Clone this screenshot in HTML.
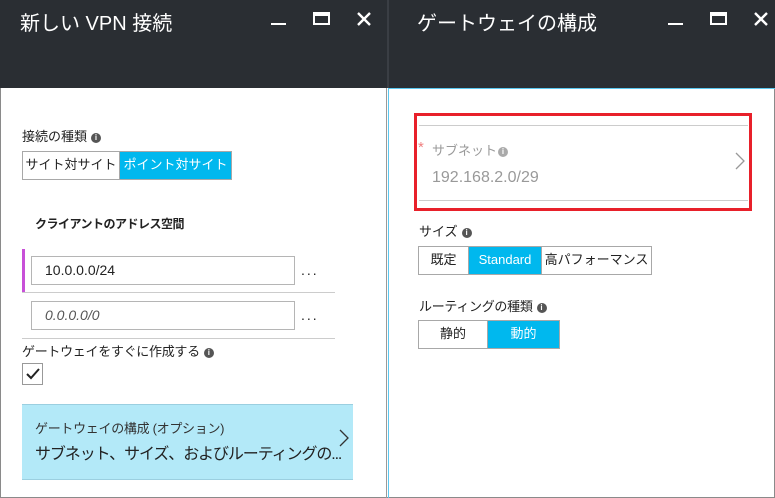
<!DOCTYPE html>
<html><head><meta charset="utf-8"><style>
*{margin:0;padding:0;box-sizing:border-box}
body{width:775px;height:498px;position:relative;overflow:hidden;background:#fff;font-family:"Liberation Sans","Noto Sans CJK JP",sans-serif;color:#222}
.a{position:absolute;white-space:nowrap}
.hdr{background:#2a2e33;height:88px;top:0}
.t{color:#fff;font-size:20px;top:7px}
.btn{border:1px solid #a8a8a8;background:#fff;font-size:13px;text-align:center;line-height:26px;overflow:hidden}
.sel{background:#00b8ee;color:#fff}
.info{display:inline-block;width:10px;height:10px;border-radius:50%;background:#555;color:#fff;font-size:8px;line-height:10px;text-align:center;font-weight:bold;vertical-align:1px;margin-left:4px;letter-spacing:0}
.inp{border:1px solid #b5b5b5;font-size:14px;padding-left:13px;line-height:26px}
.dots{font-size:14px;letter-spacing:2px}
</style></head><body>
<div class="a" style="left:0;top:0;width:775px;height:498px;border:1px solid #8a8a8a"></div>
<div class="a hdr" style="left:0;width:387px"></div>
<div class="a hdr" style="left:387px;width:388px;border-left:2px solid #3a3e44"></div>
<div class="a" style="left:386px;top:88px;width:1px;height:410px;background:#9a9a9a"></div>
<div class="a" style="left:388px;top:88px;width:387px;height:410px;border-left:1px solid #5bc8f0;border-top:1px solid #5bc8f0"></div>
<div class="a t" style="left:20px">新しい VPN 接続</div>
<div class="a t" style="left:417px">ゲートウェイの構成</div>
<div class="a" style="left:271px;top:23px;width:15px;height:2px;background:#fff"></div>
<div class="a" style="left:313px;top:12px;width:17px;height:13px;border:2px solid #fff;border-top-width:4px"></div>
<svg class="a" style="left:356px;top:11px" width="16" height="16"><path d="M2 2L14 14M14 2L2 14" stroke="#fff" stroke-width="2.4"/></svg>
<div class="a" style="left:668px;top:23px;width:15px;height:2px;background:#fff"></div>
<div class="a" style="left:710px;top:12px;width:17px;height:13px;border:2px solid #fff;border-top-width:4px"></div>
<svg class="a" style="left:753px;top:11px" width="16" height="16"><path d="M2 2L14 14M14 2L2 14" stroke="#fff" stroke-width="2.4"/></svg>
<div class="a" style="left:22px;top:126px;font-size:13px">接続の種類<span class="info">i</span></div>
<div class="a btn" style="left:22px;top:151px;width:98px;height:29px">サイト対サイト</div>
<div class="a btn sel" style="left:119px;top:151px;width:113px;height:29px">ポイント対サイト</div>
<div class="a" style="left:35px;top:215px;font-size:12px;font-weight:bold;letter-spacing:-0.5px">クライアントのアドレス空間</div>
<div class="a" style="left:22px;top:249px;width:3px;height:44px;background:#c850d8"></div>
<div class="a inp" style="left:31px;top:256px;width:264px;height:29px">10.0.0.0/24</div>
<div class="a dots" style="left:301px;top:262px">...</div>
<div class="a" style="left:22px;top:292px;width:313px;height:1px;background:#ccc"></div>
<div class="a inp" style="left:31px;top:301px;width:264px;height:29px;font-style:italic;color:#555">0.0.0.0/0</div>
<div class="a dots" style="left:301px;top:307px">...</div>
<div class="a" style="left:22px;top:338px;width:313px;height:1px;background:#ccc"></div>
<div class="a" style="left:22px;top:341px;font-size:13px;letter-spacing:-0.3px">ゲートウェイをすぐに作成する<span class="info">i</span></div>
<div class="a" style="left:22px;top:363px;width:21px;height:22px;border:1px solid #999"></div>
<svg class="a" style="left:25px;top:367px" width="16" height="14"><path d="M2 7L6 11L14 2" stroke="#222" stroke-width="2" fill="none"/></svg>
<div class="a" style="left:22px;top:404px;width:331px;height:76px;background:#b3e9f8;border-top:1px solid #9bcfe0;border-bottom:1px solid #9bcfe0"></div>
<div class="a" style="left:35px;top:418px;font-size:13px;color:#333;letter-spacing:-0.3px">ゲートウェイの構成 (オプション)</div>
<div class="a" style="left:35px;top:440px;font-size:16px;color:#222;letter-spacing:-1.1px">サブネット、サイズ、およびルーティングの...</div>
<svg class="a" style="left:338px;top:428px" width="12" height="20"><path d="M2 2L10 10L2 18" stroke="#333" stroke-width="1.3" fill="none"/></svg>
<div class="a" style="left:414px;top:113px;width:338px;height:98px;border:3px solid #e8202a"></div>
<div class="a" style="left:419px;top:125px;width:329px;height:1px;background:#ccc"></div>
<div class="a" style="left:419px;top:200px;width:329px;height:1px;background:#ccc"></div>
<div class="a" style="left:418px;top:139px;font-size:15px;color:#f08080">*</div>
<div class="a" style="left:432px;top:140px;font-size:13px;color:#999">サブネット<span class="info" style="background:#aaa;margin-left:1px">i</span></div>
<div class="a" style="left:432px;top:169px;font-size:16px;color:#999">192.168.2.0/29</div>
<svg class="a" style="left:734px;top:151px" width="12" height="20"><path d="M2 2L10 10L2 18" stroke="#999" stroke-width="1.3" fill="none"/></svg>
<div class="a" style="left:419px;top:221px;font-size:13px">サイズ<span class="info">i</span></div>
<div class="a btn" style="left:418px;top:246px;width:51px;height:29px">既定</div>
<div class="a btn sel" style="left:468px;top:246px;width:74px;height:29px">Standard</div>
<div class="a btn" style="left:541px;top:246px;width:111px;height:29px">高パフォーマンス</div>
<div class="a" style="left:419px;top:296px;font-size:13px;letter-spacing:-0.3px">ルーティングの種類<span class="info">i</span></div>
<div class="a btn" style="left:418px;top:320px;width:70px;height:29px">静的</div>
<div class="a btn sel" style="left:487px;top:320px;width:73px;height:29px">動的</div>
</body></html>
